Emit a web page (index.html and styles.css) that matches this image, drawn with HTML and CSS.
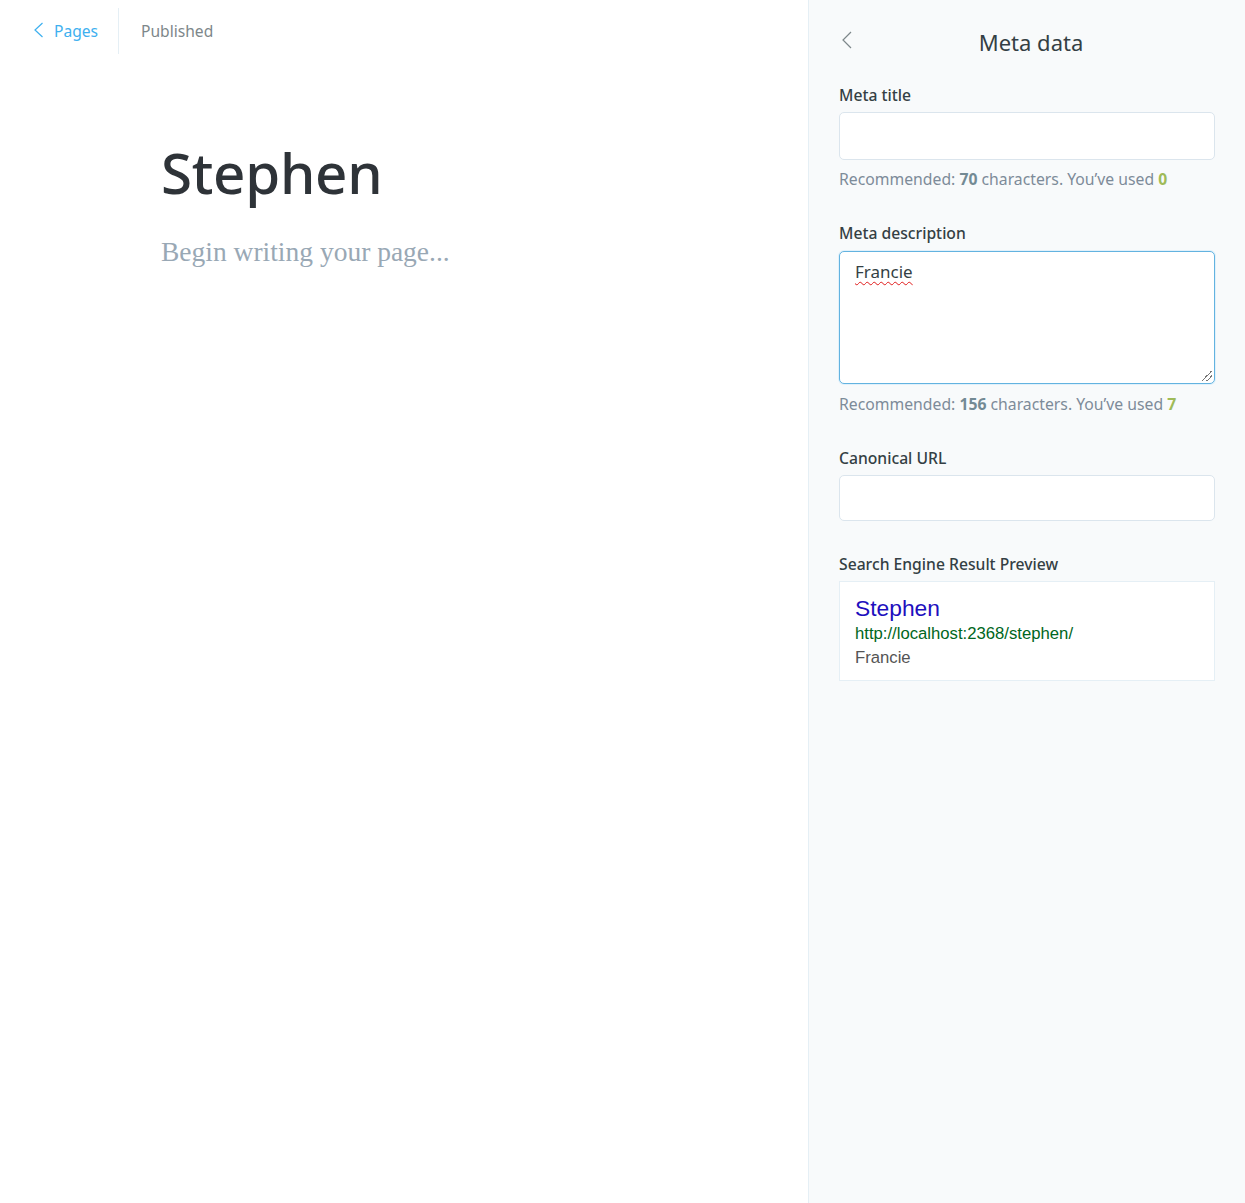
FILE: index.html
```html
<!DOCTYPE html>
<html>
<head>
<meta charset="utf-8">
<link rel="stylesheet" href="styles.css">
</head>
<body>
<div class="app">
  <main class="editor">
    <header class="editor-header">
      <a class="back-link" href="#">
        <svg class="chev" width="11" height="16" viewBox="0 0 11 16"><path d="M9.5 1 L2 8 L9.5 15" fill="none" stroke="currentColor" stroke-width="1.2"/></svg>
        <span>Pages</span>
      </a>
      <span class="divider"></span>
      <span class="status">Published</span>
    </header>
    <div class="editor-body">
      <h1 class="page-title">Stephen</h1>
      <p class="placeholder">Begin writing your page...</p>
    </div>
  </main>
  <aside class="panel">
    <div class="panel-head">
      <button class="panel-back" aria-label="Back">
        <svg width="12" height="18" viewBox="0 0 12 18"><path d="M10 1 L2 9 L10 17" fill="none" stroke="currentColor" stroke-width="1.2"/></svg>
      </button>
      <h2 class="panel-title">Meta data</h2>
    </div>
    <form class="panel-form">
      <div class="field">
        <label class="label">Meta title</label>
        <div class="input"></div>
        <p class="hint">Recommended: <b>70</b> characters. You’ve used <b class="ok">0</b></p>
      </div>
      <div class="field">
        <label class="label">Meta description</label>
        <div class="input textarea focus"><span class="typed">Francie</span><span class="grip"></span></div>
        <p class="hint hint-ta">Recommended: <b>156</b> characters. You’ve used <b class="ok">7</b></p>
      </div>
      <div class="field">
        <label class="label">Canonical URL</label>
        <div class="input short"></div>
      </div>
      <div class="field field-preview">
        <label class="label">Search Engine Result Preview</label>
        <div class="serp">
          <div class="serp-title">Stephen</div>
          <div class="serp-url">http://localhost:2368/stephen/</div>
          <div class="serp-desc">Francie</div>
        </div>
      </div>
    </form>
  </aside>
</div>
</body>
</html>
```

FILE: styles.css
```css
* { box-sizing: border-box; }
html, body { margin: 0; padding: 0; height: 100%; }
body {
  font-family: "Noto Sans", "Open Sans", sans-serif;
  color: #343f44;
  background: #fff;
}
.app {
  display: flex;
  height: 1203px;
}
.editor {
  flex: 0 0 808px;
  background: #fff;
}
.editor-header {
  display: flex;
  align-items: center;
  height: 62px;
  padding: 0 0 0 33px;
}
.back-link {
  display: flex;
  align-items: center;
  gap: 10px;
  color: #3eb0ef;
  text-decoration: none;
  font-size: 15.6px;
  height: 46px;
  padding-right: 20px;
}
.chev { color: #3eb0ef; margin-top: -2px; }
.divider {
  width: 1px;
  height: 46px;
  background: #e5eff5;
}
.status {
  margin-left: 22px;
  font-size: 15.6px;
  color: #7d878a;
}
.editor-body {
  padding: 77px 0 0 161px;
}
.page-title {
  margin: 0;
  font-size: 56.5px;
  font-weight: 500;
  line-height: 1.2;
  color: #2e3338;
  letter-spacing: -0.3px;
}
.placeholder {
  margin: 29px 0 0;
  font-family: "Liberation Serif", "DejaVu Serif", serif;
  font-size: 27.5px;
  color: #99a8b5;
}
.panel {
  flex: 1;
  background: #f8fafb;
  border-left: 1px solid #e5eff5;
  padding: 0 30px;
}
.panel-head {
  position: relative;
  display: flex;
  justify-content: center;
  align-items: center;
  height: 84px;
}
.panel-back {
  position: absolute;
  left: 2px;
  top: 31px;
  border: 0;
  background: none;
  padding: 0;
  color: #7d878a;
}
.panel-title {
  margin: 0;
  font-size: 22px;
  font-weight: 400;
  color: #343f44;
  padding-left: 8px;
}
.panel-form { display: flex; flex-direction: column; padding-top: 1px; }
.field { margin-bottom: 34px; }
.label {
  display: block;
  font-size: 15.7px;
  font-weight: 500;
  color: #343f44;
  margin-bottom: 7px;
  line-height: 20px;
}
.input {
  height: 48px;
  background: #fff;
  border: 1px solid #dbe5ed;
  border-radius: 5px;
}
.input.short { height: 46px; }
.textarea {
  position: relative;
  height: 133px;
  margin-top: 8px;
  padding: 8px 15px;
}
.focus {
  border-color: #63b3e0;
  box-shadow: 0 0 0 1px #e1f1fb;
}
.typed {
  font-size: 17px;
  color: #343f44;
  text-decoration: underline wavy #e01b1b;
  text-decoration-thickness: 1px;
  text-underline-offset: 3px;
}
.grip {
  position: absolute;
  right: 2px;
  bottom: 2px;
  width: 10px;
  height: 10px;
  background: linear-gradient(135deg, transparent 45%, #777 45%, #777 52%, transparent 52%, transparent 70%, #777 70%, #777 77%, transparent 77%);
}
.hint {
  margin: 9px 0 0;
  font-size: 15.75px;
  color: #7d8b99;
  line-height: 20px;
}
.hint-ta { margin-top: 10px; }
.hint b { color: #738a94; font-weight: 700; }
.hint b.ok { color: #9fbb58; }
.field-preview { margin-top: -1px; }
.serp {
  background: #fff;
  border: 1px solid #e5eff5;
  padding: 13px 15px 12px;
  height: 100px;
  font-family: "Liberation Sans", Arial, sans-serif;
}
.serp-title {
  font-size: 22.8px;
  color: #1e0fbe;
  line-height: 26px;
}
.serp-url {
  font-size: 16.7px;
  color: #006621;
  line-height: 25px;
}
.serp-desc {
  font-size: 16.7px;
  color: #545454;
  line-height: 24px;
}
```
